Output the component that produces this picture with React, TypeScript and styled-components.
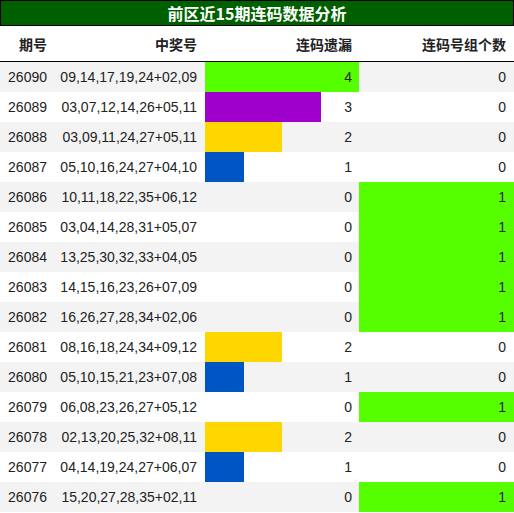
import styled, { createGlobalStyle } from "styled-components";

const GlobalStyle = createGlobalStyle`
    body {
        margin: 0;
        background: #fff;
        font-family: "Liberation Sans", Arial, "Noto Sans CJK SC", sans-serif;
        color: #222;
    }
`;

const Board = styled.div`
    width: 514px;
`;

const Title = styled.div`
    height: 24px;
    border: 1px solid #000;
    background: #006000;
    color: #fff;
    font-family: "Noto Sans CJK SC", sans-serif;
    font-weight: bold;
    font-size: 16px;
    line-height: 24px;
    text-align: center;
`;

const Grid = styled.div`
    display: grid;
    grid-template-columns: 55px 150px 154px 155px;
`;

const HeadCell = styled.div`
    height: 35px;
    border-bottom: 1px solid #000;
    font-family: "Noto Sans CJK SC", sans-serif;
    font-weight: bold;
    font-size: 14px;
    display: flex;
    align-items: center;
    justify-content: flex-end;
    padding-right: ${p => p.$pad}px;
`;

const Cell = styled.div<{ $odd: boolean; $pad: number; $fill?: string; $barWidth?: number; $barColor?: string }>`
    height: 30px;
    font-size: 14px;
    display: flex;
    align-items: center;
    justify-content: flex-end;
    padding-right: ${p => p.$pad}px;
    background-color: ${p => p.$fill || (p.$odd ? "#f3f3f3" : "#fff")};
    background-image: ${p => p.$barColor ? `linear-gradient(${p.$barColor}, ${p.$barColor})` : "none"};
    background-repeat: no-repeat;
    background-size: ${p => p.$barWidth || 0}px 100%;
`;

const BAR_COLORS: Record<number, string> = {
    1: "#0055c4",
    2: "#ffd700",
    3: "#a000cc",
    4: "#55ff00",
};

const rows: [string, string, number, number][] = [
    ["26090", "09,14,17,19,24+02,09", 4, 0],
    ["26089", "03,07,12,14,26+05,11", 3, 0],
    ["26088", "03,09,11,24,27+05,11", 2, 0],
    ["26087", "05,10,16,24,27+04,10", 1, 0],
    ["26086", "10,11,18,22,35+06,12", 0, 1],
    ["26085", "03,04,14,28,31+05,07", 0, 1],
    ["26084", "13,25,30,32,33+04,05", 0, 1],
    ["26083", "14,15,16,23,26+07,09", 0, 1],
    ["26082", "16,26,27,28,34+02,06", 0, 1],
    ["26081", "08,16,18,24,34+09,12", 2, 0],
    ["26080", "05,10,15,21,23+07,08", 1, 0],
    ["26079", "06,08,23,26,27+05,12", 0, 1],
    ["26078", "02,13,20,25,32+08,11", 2, 0],
    ["26077", "04,14,19,24,27+06,07", 1, 0],
    ["26076", "15,20,27,28,35+02,11", 0, 1],
];

const App: React.FC = (): JSX.Element => {
    return (
        <Board>
            <GlobalStyle />
            <Title>前区近15期连码数据分析</Title>
            <Grid>
                <HeadCell $pad={8}>期号</HeadCell>
                <HeadCell $pad={8}>中奖号</HeadCell>
                <HeadCell $pad={7}>连码遗漏</HeadCell>
                <HeadCell $pad={8}>连码号组个数</HeadCell>
                {rows.map(([issue, nums, miss, count], i) => {
                    const odd = i % 2 === 0;
                    return [
                        <Cell key={issue + "a"} $odd={odd} $pad={8}>{issue}</Cell>,
                        <Cell key={issue + "b"} $odd={odd} $pad={8}>{nums}</Cell>,
                        <Cell
                            key={issue + "c"}
                            $odd={odd}
                            $pad={7}
                            $barColor={BAR_COLORS[miss]}
                            $barWidth={Math.round((miss / 4) * 154)}
                        >
                            {miss}
                        </Cell>,
                        <Cell key={issue + "d"} $odd={odd} $pad={8} $fill={count > 0 ? "#55ff00" : undefined}>
                            {count}
                        </Cell>,
                    ];
                })}
            </Grid>
        </Board>
    );
};

export default App;
